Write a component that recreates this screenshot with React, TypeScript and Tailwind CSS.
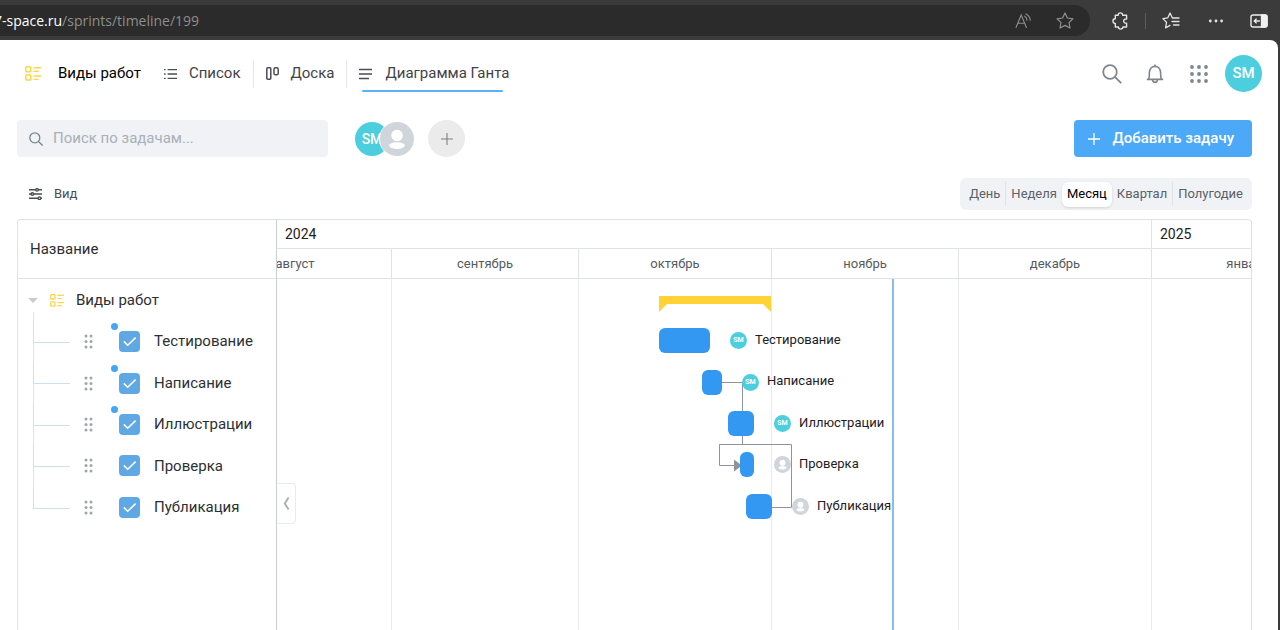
import type { ReactNode } from "react";

type Task = {
  name: string;
  start: number;
  width: number;
  gap: number;
  assigned: boolean;
  unread: boolean;
};

/* start, width and gap are pixel positions on the month scale */
const tasks: Task[] = [
  { name: "Тестирование", start: 382, width: 51, gap: 20, assigned: true, unread: true },
  { name: "Написание", start: 425, width: 20, gap: 20, assigned: true, unread: true },
  { name: "Иллюстрации", start: 451, width: 26, gap: 20, assigned: true, unread: true },
  { name: "Проверка", start: 463, width: 14, gap: 20, assigned: false, unread: false },
  { name: "Публикация", start: 469, width: 26, gap: 20, assigned: false, unread: false },
];

const months = [
  { name: "август", days: 31 },
  { name: "сентябрь", days: 30 },
  { name: "октябрь", days: 31 },
  { name: "ноябрь", days: 30 },
  { name: "декабрь", days: 31 },
  { name: "январь", days: 31 },
];

const monthWidth = (days: number) => (days === 31 ? 193 : 187);

const scales = ["День", "Неделя", "Месяц", "Квартал", "Полугодие"];

function ProjectIcon({ className }: { className: string }) {
  return (
    <svg viewBox="0 0 16 15" className={className} fill="none" stroke="#fdd648" strokeWidth="1.5">
      <rect x="0.75" y="0.75" width="5" height="5" rx="0.8" />
      <rect x="0.75" y="9" width="5" height="5" rx="0.8" />
      <path d="M8.5 1.7H16M8.5 5.2H13.5M8.5 10H16M8.5 13.4H13.5" strokeWidth="1.4" />
    </svg>
  );
}

function PersonIcon({ className }: { className: string }) {
  return (
    <svg viewBox="0 0 34 34" className={className}>
      <circle cx="17" cy="17" r="17" fill="#d0d5db" />
      <circle cx="17" cy="13.5" r="5.8" fill="#fff" />
      <ellipse cx="17" cy="23.6" rx="7.8" ry="3.4" fill="#fff" />
    </svg>
  );
}

function BrowserBar() {
  return (
    <div className="flex h-10 items-center bg-[#3b3b3b] pr-3 pt-px">
      <div className="flex h-[31px] flex-1 items-center rounded-r-full bg-[#2b2b2b] pr-4">
        <span className="-ml-1.5 flex-1 font-['Open_Sans','Noto_Sans',sans-serif] text-sm text-[#8d8d8d]">
          <span className="text-white">7-space.ru</span>/sprints/timeline/199
        </span>
        <div className="flex items-center gap-6">
          <button aria-label="Прочесть вслух" className="block">
            <svg viewBox="0 0 17 16" className="h-4 w-[17px]" fill="none" stroke="#8f8f8f" strokeWidth="1.1" strokeLinecap="round">
              <path d="M1 14.5L6.2 2L11.4 14.5M2.8 10.3H9.6" />
              <path d="M9.8 3.2Q11.8 4.7 12 7.2M11 0.9Q14.8 3 15.3 7.2" />
            </svg>
          </button>
          <button aria-label="В избранное" className="block">
            <svg viewBox="0 0 18 17" className="h-[17px] w-[18px]" fill="none" stroke="#8f8f8f" strokeWidth="1.2" strokeLinejoin="round">
              <path d="M9 1L11.4 6L17 6.8L13 10.6L14 16L9 13.4L4 16L5 10.6L1 6.8L6.6 6Z" />
            </svg>
          </button>
        </div>
      </div>
      <div className="ml-[22px] flex items-center">
        <button aria-label="Расширения" className="block">
          <svg viewBox="0 0 17 18" className="h-[18px] w-[17px]" fill="none" stroke="#e4e4e4" strokeWidth="1.4" strokeLinejoin="round">
            <path d="M3.3 3.2H6.2C6 1.7 7 .9 8.4 .9S10.8 1.7 10.6 3.2H14.6V7C13 6.8 11.6 7.6 11.6 9.1S13 11.3 14.6 11.1V15H10.9C10.9 16.3 9.9 17.1 8.6 17.1S6.4 16.3 6.4 15H3.3V11.5C1.8 11.5 .9 10.4 .9 9.1S1.8 6.8 3.3 6.8Z" />
          </svg>
        </button>
        <span className="ml-4 h-4 w-px bg-[#5c5c5c]" />
        <button aria-label="Избранное" className="ml-4 block">
          <svg viewBox="0 0 18 17" className="h-[17px] w-[18px]" fill="none" stroke="#e4e4e4" strokeWidth="1.3" strokeLinejoin="round" strokeLinecap="round">
            <path d="M11.5 6H10.4L8 1L5.8 5.8L.9 6.6L4.5 10.3L3.6 15.9L8 13.4M11.5 6H17M10 9.5H17M11.5 13H17" />
          </svg>
        </button>
        <button aria-label="Меню" className="ml-7 block">
          <svg viewBox="0 0 16 4" className="h-1 w-4" fill="#e4e4e4">
            <circle cx="2.3" cy="2" r="1.4" />
            <circle cx="8" cy="2" r="1.4" />
            <circle cx="13.6" cy="2" r="1.4" />
          </svg>
        </button>
        <button aria-label="Боковая панель" className="ml-[26px] block">
          <svg viewBox="0 0 18 14" className="h-3.5 w-[18px]" fill="none" stroke="#f0f0f0" strokeWidth="1.4">
            <rect x="1" y="1" width="16" height="12" rx="2" />
            <path d="M11.5 1H15Q17 1 17 3V11Q17 13 15 13H11.5Z" fill="#f0f0f0" />
            <path d="M9.8 7H4.4M6.6 4.6L4.2 7L6.6 9.4" strokeWidth="1.3" />
          </svg>
        </button>
      </div>
    </div>
  );
}

function Tab({ icon, children, active }: { icon: ReactNode; children: ReactNode; active?: boolean }) {
  return (
    <a href="#" className="relative flex h-9 items-center gap-3 text-[15px] text-[#3f4347]">
      {icon}
      {children}
      {active && <span className="absolute bottom-0 left-[3px] right-1.5 h-0.5 rounded-full bg-[#57b2f8]" />}
    </a>
  );
}

function Header() {
  return (
    <header className="flex h-[67px] items-center justify-between pl-[25px] pr-4">
      <nav className="flex items-center">
        <ProjectIcon className="h-[15px] w-4" />
        <h1 className="ml-[17px] mr-[23px] text-[15px] text-black">Виды работ</h1>
        <Tab
          icon={
            <svg viewBox="0 0 13 12" className="h-3 w-[13px]" stroke="#4a4e52" strokeWidth="1.4" fill="none">
              <path d="M0 1.6H1.6M3.6 1.6H13M0 6H1.6M3.6 6H13M0 10.4H1.6M3.6 10.4H13" />
            </svg>
          }
        >
          Список
        </Tab>
        <span className="mx-3 h-7 w-px bg-[#e4e6e9]" />
        <Tab
          icon={
            <svg viewBox="0 0 13 13" className="size-[13px]" stroke="#4a4e52" strokeWidth="1.5" fill="none">
              <rect x="0.8" y="0.8" width="4" height="11.4" rx="1" />
              <rect x="8" y="0.8" width="4.2" height="7" rx="1.4" />
            </svg>
          }
        >
          Доска
        </Tab>
        <span className="mx-3 h-7 w-px bg-[#e4e6e9]" />
        <Tab
          active
          icon={
            <svg viewBox="0 0 14 12" className="h-3 w-3.5" stroke="#4a4e52" strokeWidth="1.5" fill="none">
              <path d="M0 1.4H13M0 6H13M0 10.6H10" />
            </svg>
          }
        >
          Диаграмма Ганта
        </Tab>
      </nav>
      <div className="flex items-center">
        <button aria-label="Поиск">
          <svg viewBox="0 0 20 20" className="size-5" fill="none" stroke="#7d868f" strokeWidth="1.7">
            <circle cx="8" cy="8" r="6.8" />
            <path d="M12.8 12.8L19.2 19.2" />
          </svg>
        </button>
        <button aria-label="Уведомления" className="ml-6">
          <svg viewBox="0 0 18 20" className="h-5 w-[18px]" fill="none" stroke="#7d868f" strokeWidth="1.6" strokeLinejoin="round">
            <path d="M.8 15.4H17.2M2.6 15.2C3.6 13 3.2 11.5 3.4 8.6C3.6 5 5.8 2.4 9 2.4S14.4 5 14.6 8.6C14.8 11.5 14.4 13 15.4 15.2" />
            <path d="M6.6 15.8A2.4 2.6 0 0 0 11.4 15.8M9 .6V2.4" />
          </svg>
        </button>
        <button aria-label="Приложения" className="ml-[26px]">
          <svg viewBox="0 0 18 18" className="size-[18px]" fill="#7d868f">
            {[2, 9, 16].map((y) => [2, 9, 16].map((x) => <circle key={`${x}-${y}`} cx={x} cy={y} r="1.9" />))}
          </svg>
        </button>
        <button className="ml-[17px] size-[37px] rounded-full bg-[#4dcede] text-[15px] font-medium text-white">SM</button>
      </div>
    </header>
  );
}

function Toolbar() {
  return (
    <div className="mt-[13px] flex items-center">
      <label className="flex h-[37px] w-[311px] items-center gap-2.5 rounded bg-[#f0f2f5] pl-3">
        <svg viewBox="0 0 14 14" className="size-3.5" fill="none" stroke="#7d868f" strokeWidth="1.3">
          <circle cx="5.8" cy="5.8" r="5" />
          <path d="M9.5 9.5L13.6 13.6" />
        </svg>
        <input
          type="text"
          aria-label="Поиск по задачам"
          placeholder="Поиск по задачам..."
          className="min-w-0 flex-1 bg-transparent text-[15px] outline-none placeholder:text-[#a9b0b7]"
        />
      </label>
      <div className="ml-[27px] flex items-center">
        <span className="flex size-[34px] items-center justify-center rounded-full bg-[#4dcede] text-sm font-medium text-white">SM</span>
        <span className="relative -ml-[10px] rounded-full border border-white">
          <PersonIcon className="size-[34px]" />
        </span>
        <button aria-label="Добавить участника" className="ml-[13px] flex size-[37px] items-center justify-center rounded-full bg-[#ebebeb]">
          <svg viewBox="0 0 12 12" className="size-3" stroke="#7d8186" strokeWidth="1.1">
            <path d="M6 0V12M0 6H12" />
          </svg>
        </button>
      </div>
      <button className="ml-auto flex h-[37px] items-center gap-3 rounded bg-[#4ba9f7] pl-3.5 pr-[18px] text-[15px] font-medium text-white">
        <svg viewBox="0 0 12 12" className="size-3" stroke="#fff" strokeWidth="1.3">
          <path d="M6 0V12M0 6H12" />
        </svg>
        Добавить задачу
      </button>
    </div>
  );
}

function ViewBar() {
  return (
    <div className="mt-[21px] flex items-center justify-between">
      <button className="ml-3 flex items-center gap-3 text-[13px] text-[#4a4e52]">
        <svg viewBox="0 0 13 12" className="h-3 w-[13px]" fill="#fff" stroke="#4a4e52" strokeWidth="1.4">
          <path d="M0 1.8H13M0 6H13M0 10.2H13" />
          <circle cx="8" cy="1.8" r="1.3" />
          <circle cx="3.4" cy="6" r="1.3" />
          <circle cx="10.4" cy="10.2" r="1.3" />
        </svg>
        Вид
      </button>
      <div className="flex h-8 items-center rounded-md bg-[#f0f2f5] px-1">
        {scales.map((scale) => (
          <div key={scale} className="flex items-center">
            <button
              className={
                scale === "Месяц"
                  ? "h-[25px] rounded-md bg-white px-[5px] text-[13px] text-black shadow"
                  : "h-[25px] px-[5px] text-[13px] text-[#5b6168]"
              }
            >
              {scale}
            </button>
            {(scale === "День" || scale === "Квартал") && <span className="h-6 w-px bg-[#dfe2e6]" />}
          </div>
        ))}
      </div>
    </div>
  );
}

function TaskRow({ task, first, last }: { task: Task; first: boolean; last: boolean }) {
  return (
    <li className="flex flex-1 items-center pl-[15px]">
      <span className="relative flex w-[37px] flex-col self-stretch">
        {first && <span className="absolute -top-[9px] left-0 h-[9px] border-l border-[#d9e3ee]" />}
        <span className="h-[22px] border-b border-l border-[#d0dfee]" />
        <span className={last ? "flex-1" : "flex-1 border-l border-[#d9e3ee]"} />
      </span>
      <svg viewBox="0 0 9 15" className="ml-3.5 h-[15px] w-[9px]" fill="#9fa5ab">
        {[2, 7.5, 13].map((y) => [2, 7].map((x) => <circle key={`${x}-${y}`} cx={x} cy={y} r="1.5" />))}
      </svg>
      <label className="ml-[26px] flex items-center gap-3.5 text-[15px] text-[#2c2f33]">
        <span className="relative size-[21px]">
          <input type="checkbox" defaultChecked className="block size-[21px] appearance-none rounded bg-[#5fa8e4]" />
          <svg viewBox="0 0 21 21" className="pointer-events-none absolute inset-0 size-[21px]" fill="none" stroke="#fff" strokeWidth="1.5">
            <path d="M4.8 10.4L8.7 14.3L16.6 6.6" />
          </svg>
          {task.unread && <span className="absolute -left-2 -top-2 size-[7px] rounded-full bg-[#45a6f6]" />}
        </span>
        {task.name}
      </label>
    </li>
  );
}

function TaskList() {
  return (
    <section className="w-[260px] shrink-0 rounded-tl border-l border-r border-t border-[#dfe3e6] border-r-[#c9ced2]">
      <div className="flex h-[59px] items-center border-b border-[#dfe3e6] pl-3 text-[15px] text-[#2c2f33]">Название</div>
      <div className="flex h-[42px] items-center text-[15px] text-[#2c2f33]">
        <button aria-label="Свернуть группу" className="ml-2.5">
          <svg viewBox="0 0 10 5" className="h-[5px] w-2.5" fill="#c9cdd1">
            <path d="M0 0H10L5 5Z" />
          </svg>
        </button>
        <ProjectIcon className="ml-3 h-[13px] w-3.5" />
        <span className="ml-3">Виды работ</span>
      </div>
      <ul className="flex h-[207px] flex-col">
        {tasks.map((task, i) => (
          <TaskRow key={task.name} task={task} first={i === 0} last={i === tasks.length - 1} />
        ))}
      </ul>
    </section>
  );
}

function Timeline() {
  return (
    <section className="relative flex min-w-0 flex-1 flex-col overflow-hidden rounded-tr border-r border-t border-[#dfe3e6]">
      <div className="flex h-[29px] items-center border-b border-[#dfe3e6] text-sm text-[#1d2024]">
        <div className="flex h-full w-[875px] shrink-0 items-center border-r border-[#dfe3e6] pl-2">2024</div>
        <div className="pl-2">2025</div>
      </div>
      <div className="-ml-[78px] flex h-[30px] shrink-0 border-b border-[#dfe3e6] text-[13px] text-[#555a60]">
        {months.map((m) => (
          <div
            key={m.name}
            className="flex shrink-0 items-center justify-center border-r border-[#dfe3e6]"
            style={{ width: monthWidth(m.days) }}
          >
            {m.name}
          </div>
        ))}
      </div>
      <div className="relative flex-1">
        <div className="absolute inset-y-0 -left-[78px] flex">
          {months.map((m) => (
            <div key={m.name} className="border-r border-[#e9ebed]" style={{ width: monthWidth(m.days) }} />
          ))}
        </div>
        <div className="absolute inset-y-0 left-[615px] w-0.5 bg-[#85bff0]" />
        <svg className="absolute left-0 top-0 h-[250px] w-[600px]" viewBox="0 0 600 250" fill="none" stroke="#8d949b" strokeWidth="1">
          <path d="M445 103.5H465.5V165.5M465.5 165.5H442.5V186.5H459" />
          <path d="M495 228.5H514.5V165.5H442.5" />
          <path d="M457 180.5L465 186.5L457 192.5Z" fill="#8d949b" stroke="none" />
        </svg>
        <div className="relative">
          <div className="flex h-[41px] pt-[17px]">
            <svg viewBox="0 0 112 16" className="ml-[382px] h-4 w-28" fill="#ffd236">
              <path d="M0 0H112V16L104 8H8L0 16Z" />
            </svg>
          </div>
          <div className="flex h-[207px] flex-col">
            {tasks.map((task) => (
              <div key={task.name} className="flex flex-1 items-center">
                <div
                  className="h-[25px] shrink-0 rounded-md bg-[#3298f1]"
                  style={{ marginLeft: task.start, width: task.width, marginRight: task.gap }}
                />
                {task.assigned ? (
                  <span className="flex size-[17px] items-center justify-center rounded-full bg-[#4dcede] text-[7px] font-bold text-white">
                    SM
                  </span>
                ) : (
                  <PersonIcon className="size-[17px]" />
                )}
                <span className="ml-2 pb-0.5 text-[13px] text-[#1d2024]">{task.name}</span>
              </div>
            ))}
          </div>
        </div>
      </div>
      <button
        aria-label="Свернуть список"
        className="absolute left-0 top-[263px] flex h-[41px] w-[19px] items-center justify-center rounded-r border border-l-0 border-[#e9ebed] bg-white"
      >
        <svg viewBox="0 0 7 13" className="h-[13px] w-[7px]" fill="none" stroke="#a9adb1" strokeWidth="1.8">
          <path d="M5.6 .6L1.8 6.5L5.6 12.4" />
        </svg>
      </button>
    </section>
  );
}

export default function App() {
  return (
    <div className="flex min-h-screen flex-col bg-[#3b3b3b] font-[Roboto,'Noto_Sans',sans-serif]">
      <BrowserBar />
      <div className="mr-0.5 flex flex-1 flex-col rounded-tr-lg bg-white">
        <Header />
        <main className="flex flex-1 flex-col pl-[17px] pr-[26px]">
          <Toolbar />
          <ViewBar />
          <div className="mt-[9px] flex flex-1">
            <TaskList />
            <Timeline />
          </div>
        </main>
      </div>
    </div>
  );
}
